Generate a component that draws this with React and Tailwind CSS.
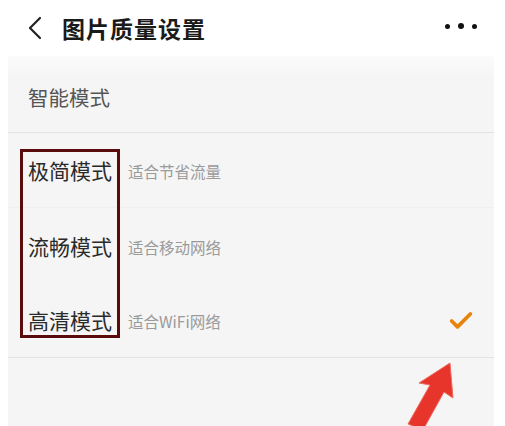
import { Check } from "lucide-react";

const modes = [
  { name: "极简模式", desc: "适合节省流量" },
  { name: "流畅模式", desc: "适合移动网络" },
  { name: "高清模式", desc: "适合WiFi网络", checked: true },
];

export default function App() {
  return (
    <div
      className="relative w-[505px] h-[426px] overflow-hidden bg-white"
      style={{ fontFamily: '"Noto Sans CJK SC", "Noto Sans", sans-serif' }}
    >
      {/* HEADER */}
      <div className="h-[56px] flex items-center justify-between pl-[26px] pr-[28px]">
        <div className="flex items-center gap-[18px]">
          <svg width="18" height="24" viewBox="0 0 18 24" fill="none">
            <path d="M14 2 L4 12 L14 22" stroke="#222" strokeWidth="2.2" strokeLinecap="round" strokeLinejoin="round" />
          </svg>
          <span className="text-[23px] font-bold text-[#1a1a1a] tracking-[1px] leading-none">图片质量设置</span>
        </div>
        <div className="flex items-center gap-[8px] -mt-[4px]">
          <span className="w-[5px] h-[5px] rounded-full bg-[#111]" />
          <span className="w-[6px] h-[6px] rounded-full bg-[#111]" />
          <span className="w-[5px] h-[5px] rounded-full bg-[#111]" />
        </div>
      </div>

      {/* BODY */}
      <div className="ml-2 mr-[11px] h-[370px] bg-[#f5f5f5] bg-gradient-to-b from-[#fbfbfb] to-[#f5f5f5] to-[6%]">
        <div className="h-[77px] flex items-center pl-[20px] pt-[6px] border-b border-[#e2e2e2]">
          <span className="text-[20.5px] text-[#555]">智能模式</span>
        </div>
        {modes.map((m, i) => (
          <div
            key={m.name}
            className={`h-[75px] flex items-center pl-[20px] pr-[19px] ${
              i === 0 ? "border-b border-[#efefef]" : ""
            } ${i === 2 ? "border-b border-[#e2e2e2]" : ""}`}
          >
            <span className="text-[21px] text-[#2a2a2a] w-[100px] pt-[2px]">{m.name}</span>
            <span className="text-[15.5px] text-[#9a9a9a] pt-[4px]">{m.desc}</span>
            {m.checked && (
              <Check className="ml-auto mt-[2px] text-[#e8830c]" size={28} strokeWidth={3.2} />
            )}
          </div>
        ))}
      </div>

      {/* HIGHLIGHT BOX */}
      <div className="absolute left-[20px] top-[149px] w-[100px] h-[189px] border-[3px] border-[#5a0b0b]" />

      {/* ARROW */}
      <svg className="absolute left-[380px] top-[355px]" width="100" height="71" viewBox="0 0 100 71">
        <polygon
          points="70,8 73,43 64,37 43,75 28,69 50,30 39,28"
          fill="#e8352b"
          stroke="#ef6b5f"
          strokeWidth="1"
          strokeLinejoin="round"
        />
      </svg>
    </div>
  );
}
